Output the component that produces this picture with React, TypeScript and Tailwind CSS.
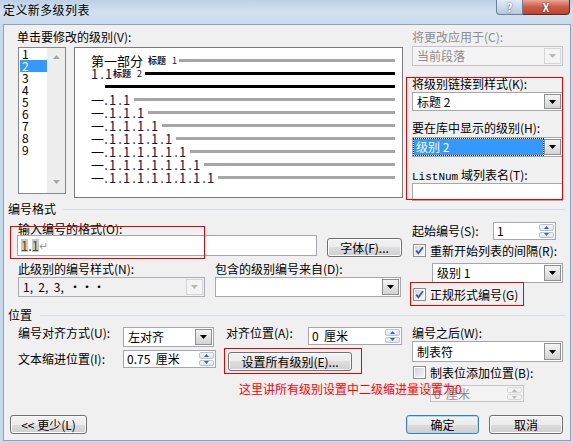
import React from "react";

const Tri = ({ c = "#000", up }: { c?: string; up?: boolean }) => (
  <svg width="7" height="4" viewBox="0 0 7 4">
    <path d={up ? "M0 4h7L3.5 0z" : "M0 0h7L3.5 4z"} fill={c} />
  </svg>
);

const SmallTri = ({ up, c }: { up?: boolean; c: string }) => (
  <svg width="5" height="3" viewBox="0 0 5 3">
    <path d={up ? "M0 3h5L2.5 0z" : "M0 0h5L2.5 3z"} fill={c} />
  </svg>
);

const DropBtn = ({ disabled }: { disabled?: boolean }) => (
  <div
    className={`w-[17px] my-px mr-px flex items-center justify-center border ${
      disabled
        ? "border-[#d5d5d5] bg-[#f4f4f4]"
        : "border-[#8e8f8f] bg-linear-to-b from-[#f4f4f4] to-[#d3d3d3]"
    }`}
  >
    <Tri c={disabled ? "#b9b9b9" : "#000"} />
  </div>
);

type BoxProps = {
  cls: string;
  text?: string;
  disabled?: boolean;
  muted?: boolean;
  selected?: boolean;
};

const Combo = ({ cls, text, disabled, muted, selected }: BoxProps) => (
  <div
    className={`${cls} flex border ${
      disabled
        ? "border-[#c3c5c8] bg-[#f4f4f4]"
        : muted
        ? "border-[#abadb3] bg-[#f0f0f0]"
        : "border-[#a5a7ab] bg-white"
    }`}
  >
    <div className="flex-1 flex items-center min-w-0">
      {selected ? (
        <span className="ml-px mr-px h-[calc(100%-2px)] flex-1 flex items-center pl-[2px] bg-[#3399ff] text-white outline-1 outline-dotted outline-[#1a1a1a]">
          {text}
        </span>
      ) : (
        <span className={`pl-[4px] whitespace-pre ${disabled ? "text-[#8d8d8d]" : ""}`}>{text}</span>
      )}
    </div>
    <DropBtn disabled={disabled || muted} />
  </div>
);

const Spin = ({ cls, text, disabled }: BoxProps) => (
  <div
    className={`${cls} flex border ${
      disabled ? "border-[#c3c5c8] bg-[#f4f4f4]" : "border-[#a5a7ab] bg-white"
    }`}
  >
    <span className={`flex-1 flex items-center pl-[3px] whitespace-pre ${disabled ? "text-[#8d8d8d]" : ""}`}>{text}</span>
    <div className="w-[15px] flex flex-col my-px mr-px gap-px">
      <div
        className={`flex-1 flex items-center justify-center rounded-[2px] border ${
          disabled ? "border-[#d8d8d8] bg-[#f2f2f2]" : "border-[#b8c5d6] bg-linear-to-b from-[#f4f7fb] to-[#dbe4ef]"
        }`}
      >
        <SmallTri up c={disabled ? "#b5b5b5" : "#4d6185"} />
      </div>
      <div
        className={`flex-1 flex items-center justify-center rounded-[2px] border ${
          disabled ? "border-[#d8d8d8] bg-[#f2f2f2]" : "border-[#b8c5d6] bg-linear-to-b from-[#f4f7fb] to-[#dbe4ef]"
        }`}
      >
        <SmallTri c={disabled ? "#b5b5b5" : "#4d6185"} />
      </div>
    </div>
  </div>
);

const Btn = ({ cls, children, def }: { cls: string; children: React.ReactNode; def?: boolean }) => (
  <div
    className={`${cls} h-[19px] flex items-center justify-center rounded-[3px] border ${
      def
        ? "border-[#3c7fb1] shadow-[inset_0_0_0_1px_#a3def8]"
        : "border-[#707070] shadow-[inset_0_0_0_1px_#fbfbfb]"
    } bg-[linear-gradient(#f2f2f2,#ebebeb_50%,#dddddd_50%,#cfcfcf)] whitespace-nowrap`}
  >
    {children}
  </div>
);

const Check = ({ on }: { on?: boolean }) => (
  <div className="w-[13px] h-[13px] shrink-0 border border-[#8e8f8f] bg-white p-px">
    <div className="w-full h-full bg-[linear-gradient(135deg,#cfd3d9,#f5f6f7)] flex items-center justify-center">
      {on && (
        <svg width="9" height="9" viewBox="0 0 9 9">
          <path d="M1.2 4.6 L3.4 7.2 L7.9 1.2" fill="none" stroke="#3f5a9a" strokeWidth="1.8" />
        </svg>
      )}
    </div>
  </div>
);

const L = ({ children, cls = "" }: { children: React.ReactNode; cls?: string }) => (
  <div className={`leading-[14px] h-[14px] whitespace-nowrap ${cls}`}>{children}</div>
);

const Seg = () => (
  <span className="w-[14px] shrink-0 flex">
    <span className="w-[6px] text-center">.</span>
    <span>1</span>
  </span>
);

const Preview = () => {
  const counts = [2, 3, 4, 5, 6, 7, 8];
  return (
    <div className="ml-[8px] w-[329px] h-[151px] border border-[#7a7a7a] bg-white pt-[6px] pl-[16px] pr-[7px] text-[#16163a] leading-none">
      <div className="h-[13px] flex items-center whitespace-nowrap">
        <span className="text-[13px] text-black">第一部分</span>
        <span className="text-[9px] font-bold ml-[5px]">标题</span>
        <span className="text-[9px] ml-[6px]">1</span>
        <div className="flex-1 h-[3px] bg-[#a6a6a6] ml-[2px]" />
      </div>
      <div className="h-[13px] flex items-center whitespace-nowrap text-[13px]">
        <span className="w-[8px] shrink-0">1</span>
        <Seg />
        <span className="text-[9px] font-bold">标题</span>
        <span className="text-[9px] ml-[6px]">2</span>
        <div className="flex-1 h-[3px] bg-black ml-[3px]" />
      </div>
      <div className="h-[13px] flex items-center">
        <div className="flex-1 h-[3px] bg-black ml-[14px]" />
      </div>
      {counts.map((n) => (
        <div key={n} className="h-[13px] flex items-center whitespace-nowrap text-[13px]">
          <span className="w-[12px] shrink-0 text-black">一</span>
          {Array.from({ length: n }).map((_, i) => (
            <Seg key={i} />
          ))}
          <div className="flex-1 h-[3px] bg-[#a6a6a6] ml-[3px]" />
        </div>
      ))}
    </div>
  );
};

const LevelList = () => (
  <div className="w-[48px] h-[147px] border border-[#828790] bg-white flex">
    <div className="w-[28px] text-[12px] leading-[12px]">
      {[1, 2, 3, 4, 5, 6, 7, 8, 9].map((n) => (
        <div
          key={n}
          className={`h-[12px] ${n === 2 ? "bg-[#3399ff] text-white ml-px pl-[2px]" : "pl-[3px]"}`}
        >
          {n}
        </div>
      ))}
    </div>
    <div className="flex-1 bg-[#ededed] flex flex-col items-center justify-between pt-[7px] pb-[9px]">
      <Tri up c="#a8a8a8" />
      <Tri c="#a8a8a8" />
    </div>
  </div>
);

export default function App() {
  return (
    <div className="w-[573px] h-[443px] bg-[#c6d9ed] flex flex-col overflow-hidden font-['Noto_Sans_CJK_SC',sans-serif] text-[12px] text-black">
      {/* title bar */}
      <div className="h-[24px] flex items-start bg-linear-to-b from-[#bcd0e6] via-[#d3e1ef] to-[#c8daec] shrink-0">
        <div className="pl-[3px] pt-[3px] text-[12px] leading-[14px] tracking-[0.4px]">定义新多级列表</div>
        <div className="ml-auto mr-[3px] flex">
          <div className="w-[27px] h-[15px] rounded-bl-[4px] border border-t-0 border-[#6d7f98] bg-linear-to-b from-[#e4ecf5] to-[#b7c8dc] flex items-center justify-center text-white font-bold text-[11px] leading-[14px] [text-shadow:0_0_2px_#2c3e5a]">
            ?
          </div>
          <div className="w-[47px] h-[15px] rounded-br-[4px] border border-t-0 border-l-0 border-[#5a2a24] bg-linear-to-b from-[#e9a797] via-[#c95c47] to-[#c2432c] flex items-center justify-center text-white font-bold text-[11px] leading-[14px] [text-shadow:0_0_2px_#4a1208]">
            X
          </div>
        </div>
      </div>

      {/* client */}
      <div className="ml-[3px] w-[568px] h-[417px] border border-[#8ea2b8] bg-[#f0f0f0] flex flex-col relative">
        {/* top block */}
        <div className="flex items-start">
          <div className="ml-[13px] flex flex-col">
            <L cls="mt-[5px]">单击要修改的级别(V):</L>
            <div className="mt-[3px] pl-px flex">
              <LevelList />
              <Preview />
            </div>
          </div>
          <div className="ml-[9px] w-[151px] flex flex-col">
            <L cls="mt-[5px] text-[#8d8d8d]">将更改应用于(C):</L>
            <Combo cls="mt-[2px] h-[20px]" text="当前段落" disabled />
            <L cls="mt-[11px]">将级别链接到样式(K):</L>
            <Combo cls="mt-px h-[19px]" text="标题 2" />
            <L cls="mt-[10px]">要在库中显示的级别(H):</L>
            <Combo cls="mt-[2px] h-[20px]" text="级别 2" selected />
            <L cls="mt-[11px]">
              <span className="font-['Liberation_Mono',monospace] text-[11px]">ListNum</span> 域列表名(T):
            </L>
            <div className="mt-px h-[18px] border border-[#a5a7ab] bg-white" />
          </div>
        </div>

        {/* 编号格式 */}
        <div className="mt-px h-[14px] flex items-center">
          <L cls="ml-[4px]">编号格式</L>
          <div className="flex-1 h-px bg-[#d5dfe5] ml-[7px] mr-[5px]" />
        </div>

        <div className="flex items-start">
          <div className="ml-[14px] w-[384px] flex flex-col">
            <L cls="mt-[6px]">输入编号的格式(O):</L>
            <div className="-mt-px -ml-px flex items-start">
              <div className="w-[300px] h-[21px] border border-[#a5a7ab] bg-white flex items-center pl-[3px] text-[13px] leading-none">
                <span className="bg-[#c8c8c8] text-[#6b4a10]">1</span>
                <span>.</span>
                <span className="bg-[#c8c8c8] text-[#6b4a10]">1</span>
                <span className="text-[#9a9a9a] text-[11px]">↵</span>
              </div>
              <Btn cls="ml-[10px] mt-[3px] w-[75px]">字体(F)...</Btn>
            </div>
            <div className="mt-[5px] flex">
              <div className="w-[187px] flex flex-col">
                <L>此级别的编号样式(N):</L>
                <Combo cls="mt-px h-[20px]" text="1,  2,  3,  ···" muted />
              </div>
              <div className="ml-[10px] w-[186px] flex flex-col">
                <L>包含的级别编号来自(D):</L>
                <Combo cls="mt-px h-[20px]" text="" />
              </div>
            </div>
          </div>

          <div className="ml-[10px] w-[151px] flex flex-col">
            <div className="mt-[6px] h-[18px] flex items-center">
              <L cls="w-[81px]">起始编号(S):</L>
              <Spin cls="w-[63px] h-[18px]" text="1" />
            </div>
            <div className="mt-[4px] h-[13px] pl-px flex items-center">
              <Check on />
              <L cls="ml-[4px]">重新开始列表的间隔(R):</L>
            </div>
            <Combo cls="mt-[6px] ml-[20px] w-[131px] h-[20px]" text="级别 1" />
            <div className="mt-[5px] h-[13px] pl-px flex items-center">
              <Check on />
              <L cls="ml-[4px]">正规形式编号(G)</L>
            </div>
          </div>
        </div>

        {/* 位置 */}
        <div className="mt-[7px] h-[14px] flex items-center">
          <L cls="ml-[4px]">位置</L>
          <div className="flex-1 h-px bg-[#d5dfe5] ml-[8px] mr-[5px]" />
        </div>

        <div className="flex items-start">
          <div className="ml-[14px] w-[384px] flex flex-col">
            <div className="mt-[4px] flex items-start">
              <L cls="w-[105px]">编号对齐方式(U):</L>
              <Combo cls="mt-px w-[91px] h-[20px]" text="左对齐" />
              <L cls="ml-[12px] w-[82px]">对齐位置(A):</L>
              <Spin cls="mt-px w-[94px] h-[18px]" text="0  厘米" />
            </div>
            <div className="mt-[3px] flex items-start">
              <L cls="mt-[2px] w-[105px]">文本缩进位置(I):</L>
              <Spin cls="w-[93px] h-[18px]" text="0.75  厘米" />
              <Btn cls="ml-[12px] mt-[2px] w-[124px]">设置所有级别(E)...</Btn>
            </div>
          </div>
          <div className="ml-[10px] w-[151px] flex flex-col">
            <L cls="mt-[4px]">编号之后(W):</L>
            <Combo cls="mt-px h-[21px]" text="制表符" />
            <div className="mt-[4px] h-[13px] pl-px flex items-center">
              <Check />
              <L cls="ml-[4px]">制表位添加位置(B):</L>
            </div>
            <Spin cls="mt-[6px] ml-[18px] w-[94px] h-[17px]" text="0  厘米" disabled />
          </div>
        </div>

        {/* bottom buttons */}
        <div className="mt-auto mb-[6px] flex">
          <Btn cls="ml-[6px] w-[77px]">&lt;&lt; 更少(L)</Btn>
          <Btn cls="ml-auto w-[73px]" def>
            确定
          </Btn>
          <Btn cls="ml-[10px] mr-[7px] w-[74px]">取消</Btn>
        </div>

        {/* red annotations */}
        <div className="absolute left-[402px] top-[52px] w-[157px] h-[123px] border border-[#ee0000] pointer-events-none" />
        <div className="absolute left-[6px] top-[201px] w-[195px] h-[33px] border border-[#ee0000] pointer-events-none" />
        <div className="absolute left-[406px] top-[257px] w-[114px] h-[24px] border border-[#ee0000] pointer-events-none" />
        <div className="absolute left-[220px] top-[323px] w-[138px] h-[26px] border border-[#ee0000] pointer-events-none" />
        <div className="absolute left-[235px] top-[357px] leading-[14px] whitespace-nowrap text-[#ff0000]">
          这里讲所有级别设置中二级缩进量设置为0
        </div>
      </div>
    </div>
  );
}
